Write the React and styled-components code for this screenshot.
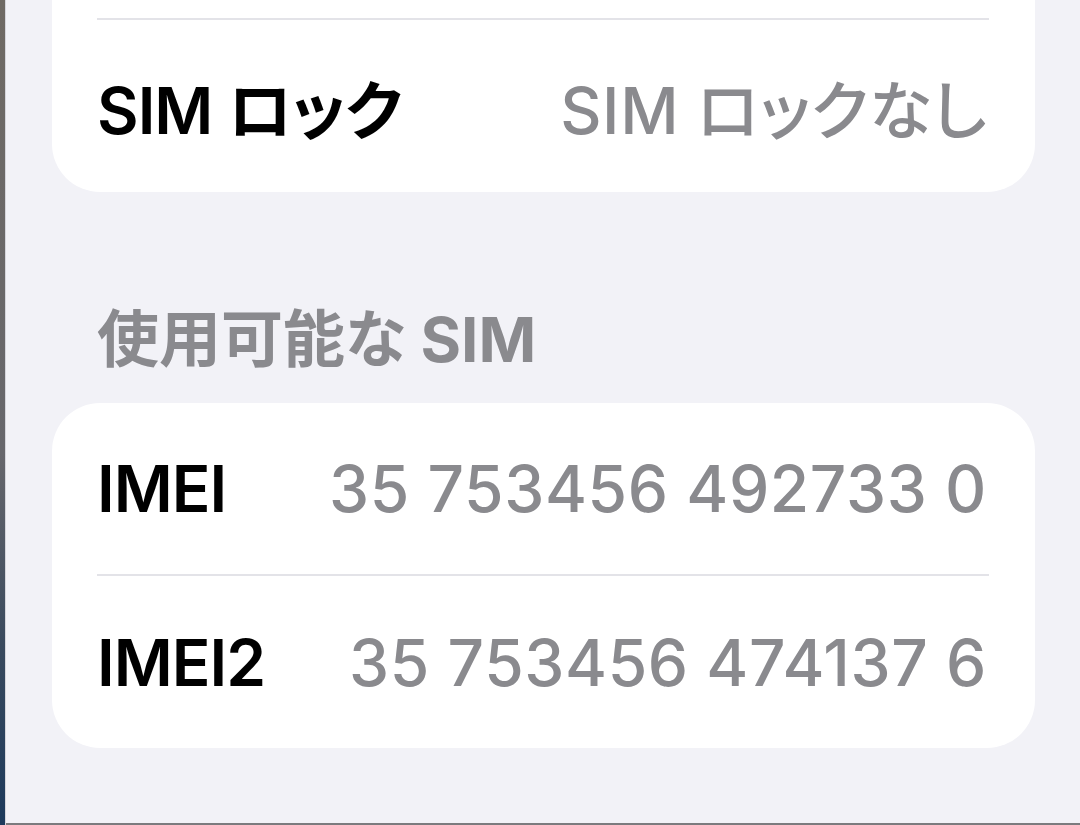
import React from "react";
import styled, { createGlobalStyle } from "styled-components";

const Global = createGlobalStyle`
  html, body { margin: 0; padding: 0; }
  body { background: #f2f2f7; overflow: hidden; }
`;

const Page = styled.div`
  display: flex;
  width: 1080px;
  height: 825px;
  overflow: hidden;
  font-family: Inter, "Noto Sans CJK JP", sans-serif;
`;

const Edge = styled.div`
  flex: 0 0 5px;
  background: linear-gradient(180deg, #6f6a64 0%, #67676c 55%, #3a4a5e 78%, #1d3a5c 100%);
  border-right: 1px solid #d6d6dc;
`;

const Main = styled.main`
  flex: 1;
  display: flex;
  flex-direction: column;
  background: #f2f2f7;
  padding: 0 45px 0 46px;
  border-bottom: 2px solid #7b7b7e;
  box-sizing: border-box;
`;

const Card = styled.section`
  background: #ffffff;
  border-radius: ${(p) => (p.$continued ? "0 0 48px 48px" : "48px")};
  padding-top: ${(p) => (p.$continued ? "18px" : "0")};
  display: flex;
  flex-direction: column;
`;

const Separator = styled.div`
  height: 2px;
  margin: 0 46px 0 45px;
  background: #e3e3e8;
`;

const Row = styled.div`
  display: flex;
  align-items: center;
  justify-content: space-between;
  height: ${(p) => p.$h || 172}px;
  padding: 0 48px 0 45px;
  font-size: 64px;
`;

const Label = styled.span`
  color: #000000;
  font-weight: 600;
  letter-spacing: -1px;
  font-feature-settings: "palt";
`;

const Value = styled.span`
  color: #8a8a8e;
  font-weight: 500;
  letter-spacing: 0.6px;
  font-feature-settings: "palt";
`;

const SectionHeader = styled.h2`
  margin: 108px 0 23px 0;
  padding-left: 45px;
  height: 80px;
  line-height: 80px;
  font-size: 62px;
  font-weight: 700;
  color: #8a8a8e;
  font-feature-settings: "palt";
`;

export default function App() {
  return (
    <Page>
      <Global />
      <Edge />
      <Main>
        <Card $continued>
          <Separator />
          <Row $h={172}>
            <Label>SIM ロック</Label>
            <Value>SIM ロックなし</Value>
          </Row>
        </Card>
        <SectionHeader>使用可能な SIM</SectionHeader>
        <Card>
          <Row $h={171}>
            <Label>IMEI</Label>
            <Value>35 753456 492733 0</Value>
          </Row>
          <Separator />
          <Row $h={172}>
            <Label>IMEI2</Label>
            <Value>35 753456 474137 6</Value>
          </Row>
        </Card>
      </Main>
    </Page>
  );
}
